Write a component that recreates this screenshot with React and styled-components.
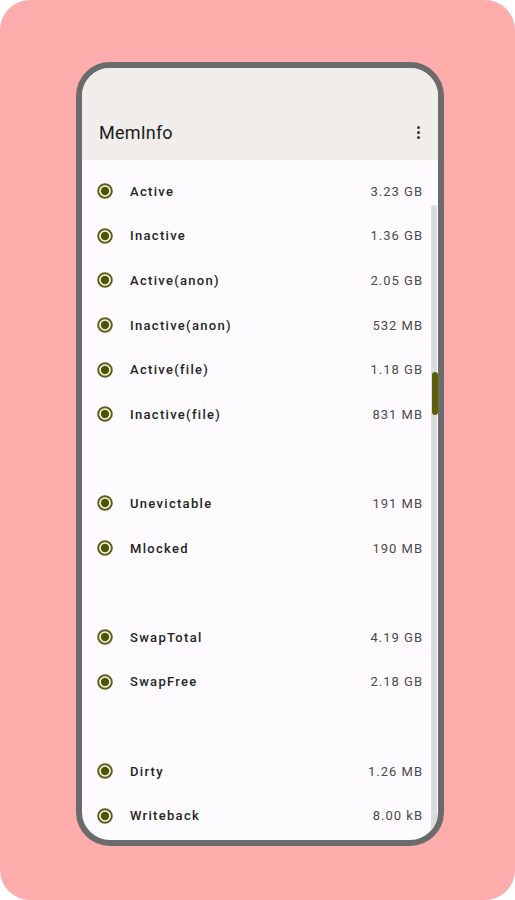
import React from 'react';
import styled, { createGlobalStyle } from 'styled-components';

const GlobalStyle = createGlobalStyle`
  body {
    margin: 0;
    background: #ffffff;
    font-family: Roboto, "Liberation Sans", sans-serif;
  }
`;

const Backdrop = styled.div`
  width: 515px;
  height: 900px;
  background: #ffacac;
  border-radius: 30px;
  display: flex;
  padding: 62px 0 0 76px;
  box-sizing: border-box;
`;

const Phone = styled.div`
  width: 368px;
  height: 784px;
  border: 6px solid #6b6b6b;
  border-radius: 34px;
  box-sizing: border-box;
  overflow: hidden;
  display: flex;
  flex-direction: column;
  background: #fdfbfd;
`;

const TopBar = styled.div`
  background: #f0edea;
  padding: 36px 16px 0 17px;
  height: 92px;
  box-sizing: border-box;
`;

const TitleRow = styled.div`
  height: 56px;
  display: flex;
  align-items: center;
  justify-content: space-between;
  .title {
    font-size: 18px;
    color: #1c1b1b;
    letter-spacing: 0.2px;
  }
`;

const MenuDots = styled.div`
  display: flex;
  flex-direction: column;
  gap: 2px;
  padding: 0 2px;
  span {
    width: 3px;
    height: 3px;
    border-radius: 50%;
    background: #3a3a3a;
  }
`;

const ListArea = styled.div`
  flex: 1;
  position: relative;
  padding-top: 9px;
`;

const Row = styled.div`
  height: 44.6px;
  display: flex;
  align-items: center;
  padding: 0 15px 0 15px;
  .label {
    margin-left: 17px;
    flex: 1;
    font-size: 13px;
    font-weight: 500;
    letter-spacing: 1.3px;
    color: #242424;
  }
  .value {
    font-size: 13px;
    letter-spacing: 1px;
    color: #4a4a4a;
  }
`;

const Spacer = styled.div`
  height: 44.6px;
`;

const ScrollTrack = styled.div`
  position: absolute;
  top: 45px;
  bottom: 0;
  right: 1px;
  width: 6px;
  background: #dcdcdc;
  border-radius: 3px 3px 0 0;
`;

const ScrollThumb = styled.div`
  position: absolute;
  top: 167px;
  left: 1px;
  width: 6px;
  height: 43px;
  background: #5c5f0a;
  border-radius: 3px;
`;

const RadioIcon = () => (
  <svg width="16" height="16" viewBox="0 0 16 16">
    <circle cx="8" cy="8" r="6.8" fill="none" stroke="#5e6314" strokeWidth="2" />
    <circle cx="8" cy="8" r="4.2" fill="#4f5400" />
  </svg>
);

const groups = [
  [
    ['Active', '3.23 GB'],
    ['Inactive', '1.36 GB'],
    ['Active(anon)', '2.05 GB'],
    ['Inactive(anon)', '532 MB'],
    ['Active(file)', '1.18 GB'],
    ['Inactive(file)', '831 MB'],
  ],
  [
    ['Unevictable', '191 MB'],
    ['Mlocked', '190 MB'],
  ],
  [
    ['SwapTotal', '4.19 GB'],
    ['SwapFree', '2.18 GB'],
  ],
  [
    ['Dirty', '1.26 MB'],
    ['Writeback', '8.00 kB'],
  ],
];

const App = () => (
  <>
    <GlobalStyle />
    <Backdrop>
      <Phone>
        <TopBar>
          <TitleRow>
            <span className="title">MemInfo</span>
            <MenuDots>
              <span />
              <span />
              <span />
            </MenuDots>
          </TitleRow>
        </TopBar>
        <ListArea>
          {groups.map((items, gi) => (
            <React.Fragment key={gi}>
              {gi > 0 && <Spacer />}
              {items.map(([label, value]) => (
                <Row key={label}>
                  <RadioIcon />
                  <span className="label">{label}</span>
                  <span className="value">{value}</span>
                </Row>
              ))}
            </React.Fragment>
          ))}
          <ScrollTrack>
            <ScrollThumb />
          </ScrollTrack>
        </ListArea>
      </Phone>
    </Backdrop>
  </>
);

export default App;
